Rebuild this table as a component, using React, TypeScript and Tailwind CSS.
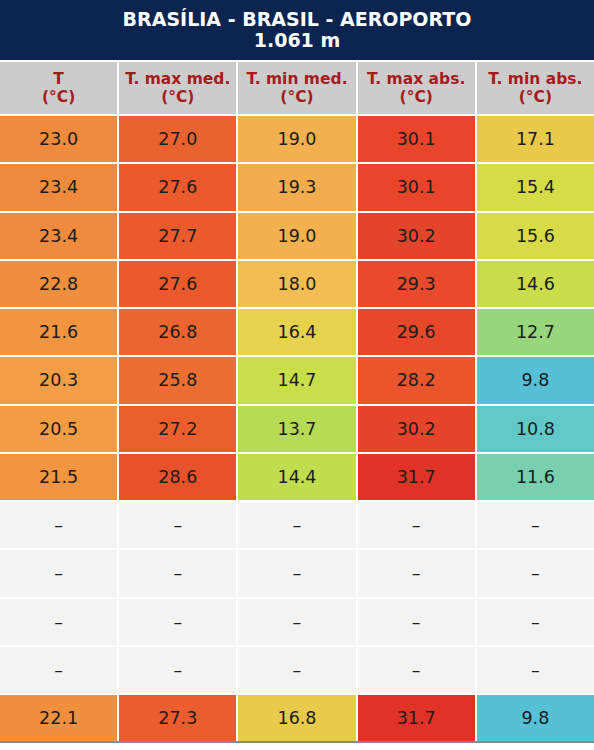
const columns = [
  ["T", "(°C)"],
  ["T. max med.", "(°C)"],
  ["T. min med.", "(°C)"],
  ["T. max abs.", "(°C)"],
  ["T. min abs.", "(°C)"],
]

type Cell = [string, string]

// value + background class, one row per month, then the year average
const rows: Cell[][] = [
  [["23.0", "bg-[#f08a3c]"], ["27.0", "bg-[#e9622f]"], ["19.0", "bg-[#f3b04f]"], ["30.1", "bg-[#e8452a]"], ["17.1", "bg-[#e8c94a]"]],
  [["23.4", "bg-[#f08a3c]"], ["27.6", "bg-[#ea5a2c]"], ["19.3", "bg-[#f3ad4e]"], ["30.1", "bg-[#e8452a]"], ["15.4", "bg-[#d5dc45]"]],
  [["23.4", "bg-[#f08a3c]"], ["27.7", "bg-[#ea5a2c]"], ["19.0", "bg-[#f3b04f]"], ["30.2", "bg-[#e5442a]"], ["15.6", "bg-[#d7db48]"]],
  [["22.8", "bg-[#f08e3d]"], ["27.6", "bg-[#ea5a2c]"], ["18.0", "bg-[#f2bd52]"], ["29.3", "bg-[#e84a2b]"], ["14.6", "bg-[#c9dd4a]"]],
  [["21.6", "bg-[#f29440]"], ["26.8", "bg-[#ec6530]"], ["16.4", "bg-[#e6d24c]"], ["29.6", "bg-[#e8482a]"], ["12.7", "bg-[#97d67a]"]],
  [["20.3", "bg-[#f39e45]"], ["25.8", "bg-[#ed6e33]"], ["14.7", "bg-[#c8df4a]"], ["28.2", "bg-[#eb552c]"], ["9.8", "bg-[#56c0d6]"]],
  [["20.5", "bg-[#f39c44]"], ["27.2", "bg-[#eb5e2e]"], ["13.7", "bg-[#b6dc55]"], ["30.2", "bg-[#e5442a]"], ["10.8", "bg-[#62c8c8]"]],
  [["21.5", "bg-[#f29440]"], ["28.6", "bg-[#e8522b]"], ["14.4", "bg-[#c1dd4d]"], ["31.7", "bg-[#e03226]"], ["11.6", "bg-[#78d0b0]"]],
]

const empty: Cell[] = Array(5).fill(["–", "bg-[#f3f3f3]"])

const total: Cell[] = [
  ["22.1", "bg-[#f0903e]"], ["27.3", "bg-[#eb5d2e]"], ["16.8", "bg-[#e8cb4a]"], ["31.7", "bg-[#e03226]"], ["9.8", "bg-[#56c0d6]"],
]

function Row({ cells, last }: { cells: Cell[]; last?: boolean }) {
  return (
    <div className={`grid grid-cols-5 gap-[2px] ${last ? "border-b-2 border-[#8a8a8a]" : ""}`}>
      {cells.map(([v, bg], i) => (
        <div
          key={i}
          className={`${bg} h-[46.25px] flex items-center justify-center text-[17.5px] text-[#1c1c1c]`}
        >
          {v}
        </div>
      ))}
    </div>
  )
}

export default function App() {
  const allRows = [...rows, empty, empty, empty, empty]
  return (
    <div className="w-[594px] h-[750px] bg-white" style={{ fontFamily: '"DejaVu Sans", Verdana, sans-serif' }}>
      {/* Title */}
      <div className="h-[60px] bg-[#0b2450] flex flex-col items-center justify-center text-white font-bold text-[19px] leading-[21px]">
        <div>BRASÍLIA - BRASIL - AEROPORTO</div>
        <div>1.061 m</div>
      </div>

      <div className="flex flex-col gap-[2px] pt-[2px]">
        {/* Column headers */}
        <div className="grid grid-cols-5 gap-[2px]">
          {columns.map(([a, b]) => (
            <div
              key={a}
              className="h-[52px] bg-[#cccccc] flex flex-col items-center justify-center text-[15.5px] leading-[18px] font-bold text-[#a51c1c]"
            >
              <span>{a}</span>
              <span>{b}</span>
            </div>
          ))}
        </div>

        {allRows.map((r, i) => (
          <Row key={i} cells={r} />
        ))}
        <Row cells={total} last />
      </div>
    </div>
  )
}
